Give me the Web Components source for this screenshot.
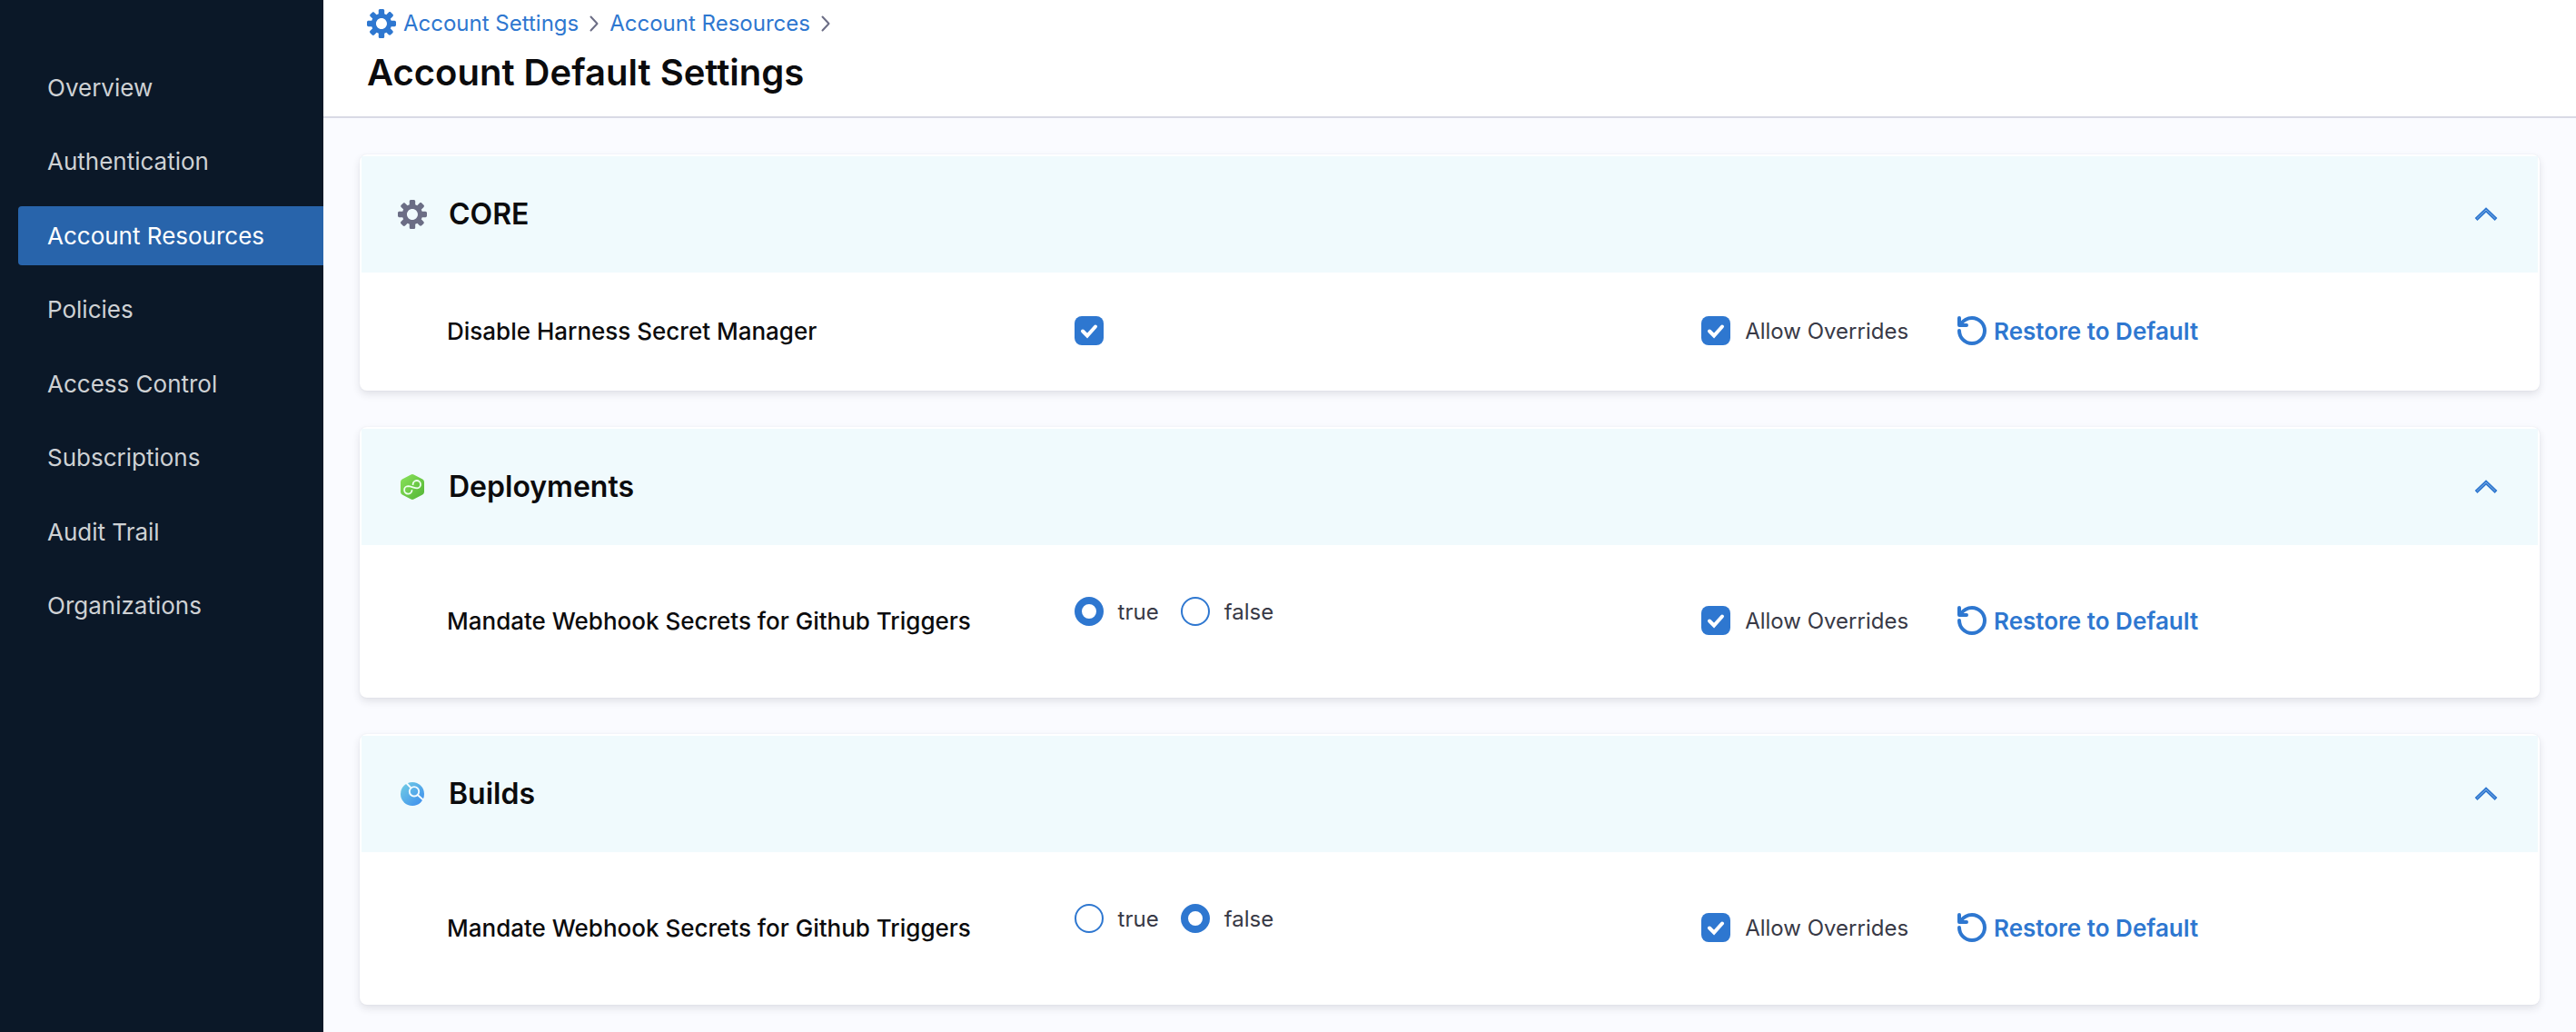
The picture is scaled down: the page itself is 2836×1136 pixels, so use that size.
<!DOCTYPE html>
<html lang="en">
<head>
<meta charset="utf-8">
<title>Account Default Settings</title>
<style>
  html, body { height: 100%; }
  body { margin: 0; overflow: hidden; font-family: Inter, "Liberation Sans", sans-serif; color: #0b0b0d; background: #fafbff; }
</style>
</head>
<body>
<app-shell>
  <side-nav slot="nav"></side-nav>
  <page-header slot="header" heading="Account Default Settings"></page-header>
  <settings-card heading="CORE" icon="core">
    <setting-row label="Disable Harness Secret Manager" type="checkbox"></setting-row>
  </settings-card>
  <settings-card heading="Deployments" icon="deployments">
    <setting-row label="Mandate Webhook Secrets for Github Triggers" type="radio" value="true"></setting-row>
  </settings-card>
  <settings-card heading="Builds" icon="builds">
    <setting-row label="Mandate Webhook Secrets for Github Triggers" type="radio" value="false"></setting-row>
  </settings-card>
</app-shell>

<script>
const COG = `<path fill="currentColor" fill-rule="evenodd" d="M15.19 6.39h-1.85c-.11-.37-.27-.71-.45-1.04l1.36-1.36c.31-.31.31-.82 0-1.13l-1.13-1.13c-.31-.31-.82-.31-1.13 0l-1.36 1.36c-.33-.17-.67-.33-1.04-.44V.79c0-.44-.36-.8-.8-.8h-1.6c-.44 0-.8.36-.8.8v1.86c-.39.12-.75.28-1.1.47l-1.3-1.3c-.3-.3-.79-.3-1.09 0L1.82 2.91c-.3.3-.3.79 0 1.09l1.3 1.3c-.2.34-.36.7-.48 1.09H.79c-.44 0-.8.36-.8.8v1.6c0 .44.36.8.8.8h1.85c.11.37.27.71.45 1.04l-1.36 1.36c-.31.31-.31.82 0 1.13l1.13 1.13c.31.31.82.31 1.13 0l1.36-1.36c.33.18.67.33 1.04.44v1.86c0 .44.36.8.8.8h1.6c.44 0 .8-.36.8-.8v-1.86c.39-.12.75-.28 1.1-.47l1.3 1.3c.3.3.79.3 1.09 0l1.09-1.09c.3-.3.3-.79 0-1.09l-1.3-1.3c.19-.35.36-.71.48-1.1h1.85c.44 0 .8-.36.8-.8v-1.6a.816.816 0 00-.81-.79zm-7.2 4.6c-1.66 0-3-1.34-3-3s1.34-3 3-3 3 1.34 3 3-1.34 3-3 3z"/>`;

const ICONS = {
  core: ['0 0 16 16', COG],
  deployments: ['0 0 32 32', `
    <defs><linearGradient id="g" x1="0" y1="0" x2="1" y2="1"><stop offset="0" stop-color="#8be35b"/><stop offset="1" stop-color="#52b435"/></linearGradient></defs>
    <path fill="url(#g)" d="M14.4 2.4a3.4 3.4 0 0 1 3.2 0l9.6 5.2a3.4 3.4 0 0 1 1.8 3v10.8a3.4 3.4 0 0 1-1.8 3l-9.6 5.2a3.4 3.4 0 0 1-3.2 0l-9.6-5.2a3.4 3.4 0 0 1-1.8-3V10.6a3.4 3.4 0 0 1 1.8-3z"/>
    <path fill="none" stroke="#effff0" stroke-width="1.8" stroke-linecap="round" d="M16.6 13.2a4.2 4.2 0 1 1 4.6 4.2C18 17.3 14.5 15.2 11.2 15.2a4.2 4.2 0 1 0 4.3 4.600"/>`],
  builds: ['0 0 32 32', `
    <defs><linearGradient id="g" x1="0" y1="0" x2="1" y2="1"><stop offset="0" stop-color="#73cfe4"/><stop offset="1" stop-color="#3b8bee"/></linearGradient></defs>
    <circle cx="16" cy="16" r="13" fill="url(#g)"/>
    <g fill="none" stroke="#f3fbff" stroke-width="1.9"><path d="M9 3.500l5.200 5.500M21.800 17l6.700 6"/><circle cx="18" cy="13.300" r="5.200"/></g>`]
};
const svg = (name) => `<svg viewBox="${ICONS[name][0]}" width="32" height="32" aria-hidden="true">${ICONS[name][1]}</svg>`;

function define(name, render) {
  customElements.define(name, class extends HTMLElement {
    connectedCallback() {
      if (this.shadowRoot) return;
      const root = this.attachShadow({ mode: 'open' });
      root.innerHTML = render(this);
    }
  });
}

define('app-shell', () => `
  <style>
    :host { display: flex; min-height: 100%; }
    ::slotted(side-nav) { flex: none; }
    main { flex: 1; min-width: 0; }
    .cards { display: flex; flex-direction: column; gap: 40px; padding: 40px; }
  </style>
  <slot name="nav"></slot>
  <main><slot name="header"></slot><div class="cards"><slot></slot></div></main>`);

define('side-nav', () => {
  const items = ['Overview', 'Authentication', 'Account Resources', 'Policies', 'Access Control', 'Subscriptions', 'Audit Trail', 'Organizations'];
  return `
  <style>
    :host { display: block; box-sizing: border-box; width: 356px; padding: 64px 0 0 20px; background: #0b1828; }
    nav { display: flex; flex-direction: column; justify-content: space-between; height: 635px; }
    a { display: flex; align-items: center; height: 65px; padding-left: 32px; border-radius: 4px 0 0 4px;
        font-size: 26px; color: #ced1d4; text-decoration: none; }
    a[aria-current] { color: #fff; background: #2864ab; }
  </style>
  <nav aria-label="Account">${items.map(t => `<a href="#"${t === 'Account Resources' ? ' aria-current="page"' : ''}>${t}</a>`).join('')}</nav>`;
});

define('page-header', (el) => {
  const sep = `<svg class="sep" viewBox="0 0 10 18" width="10" height="18" aria-hidden="true"><path d="M1.500 1.500L8.500 9l-7 7.500" fill="none" stroke="#6b6d85" stroke-width="2" stroke-linecap="round" stroke-linejoin="round"/></svg>`;
  return `
  <style>
    :host { display: block; box-sizing: border-box; height: 130px; padding: 10px 48px 0; background: #fff; border-bottom: 2px solid #d9dae5; }
    nav { display: flex; align-items: center; gap: 12px; height: 32px; font-size: 24px; line-height: 30px; }
    a { display: flex; align-items: center; gap: 8px; color: #2e77d0; text-decoration: none; }
    h1 { margin: 12px 0 0; font-size: 40px; line-height: 52px; font-weight: 600; }
  </style>
  <nav aria-label="Breadcrumb"><a href="#">${svg('core')}Account Settings</a>${sep}<a href="#">Account Resources</a>${sep}</nav>
  <h1>${el.getAttribute('heading')}</h1>`;
});

define('settings-card', (el) => `
  <style>
    :host { display: block; padding: 2px; border-radius: 8px; background: #fff; box-shadow: 0 4px 8px rgba(40,41,61,.12), 0 0 2px rgba(40,41,61,.06); }
    header { display: flex; align-items: center; gap: 24px; height: 128px; padding: 0 44px 0 40px; background: #f0fafd; }
    header svg { color: #6b6d85; }
    h2 { flex: 1; margin: 0; font-size: 32px; line-height: 40px; font-weight: 600; }
    button { display: flex; padding: 0; border: 0; background: none; }
  </style>
  <header>
    ${svg(el.getAttribute('icon'))}
    <h2>${el.getAttribute('heading')}</h2>
    <button type="button" aria-label="Collapse ${el.getAttribute('heading')}"><svg viewBox="0 0 26 18" width="26" height="18" aria-hidden="true"><g fill="none"><path d="M2 14.500L13 4l11 10.500" stroke="#2e77d0" stroke-width="4"/><path d="M3 13.500L13 4l10 9.500" stroke="#7fadE3" stroke-width="1"/></g></svg></button>
  </header>
  <slot></slot>`);

define('setting-row', (el) => {
  const label = el.getAttribute('label');
  const isRadio = el.getAttribute('type') === 'radio';
  const box = (id) => `<span class="box"><input type="checkbox" id="${id}" checked><svg viewBox="0 0 32 32" width="32" height="32" aria-hidden="true"><path d="M9 16.500l5 5L23 11.500" fill="none" stroke="#fff" stroke-width="4" stroke-linecap="round"/></svg></span>`;
  const radio = (v) => `<label class="option"><input type="radio" name="v" value="${v}"${el.getAttribute('value') === v ? ' checked' : ''}>${v}</label>`;
  return `
  <style>
    :host { display: block; }
    .row { display: grid; grid-template-columns: 3fr 3fr 4fr; align-items: center; min-height: 128px; padding-left: 94px; font-size: 24px; color: #383946; }
    .row.radio { min-height: 166px; }
    .name { font-size: 26px; font-weight: 500; color: #0b0b0d; }
    .options { display: flex; gap: 24px; padding-bottom: 20px; }
    .option { display: flex; align-items: center; gap: 16px; }
    .actions { display: flex; align-items: center; gap: 54px; }
    .box { display: grid; width: 32px; height: 32px; }
    .box > * { grid-area: 1 / 1; }
    .box svg { pointer-events: none; }
    input { appearance: none; box-sizing: border-box; width: 32px; height: 32px; margin: 0; border-radius: 8px; background: #2e77d0; }
    input[type=radio] { border: 2px solid #2e77d0; border-radius: 50%; background: #fff; }
    input[type=radio]:checked { border-width: 8px; }
    button { display: flex; align-items: center; gap: 8px; padding: 0; border: 0; background: none; font: inherit; font-size: 26px; font-weight: 600; color: #2e77d0; }
  </style>
  <div class="row ${isRadio ? 'radio' : ''}">
    ${isRadio
      ? `<span class="name" id="n">${label}</span><div class="options" role="radiogroup" aria-labelledby="n">${radio('true')}${radio('false')}</div>`
      : `<label class="name" for="v">${label}</label>${box('v')}`}
    <div class="actions">
      <label class="option" for="o">${box('o')}Allow Overrides</label>
      <button type="button"><svg viewBox="0 0 16 16" width="32" height="32" aria-hidden="true"><path d="M1 8a7 7 0 1 0 7-7C5.600 1 3.400 2.200 1.800 4.400M1 1v4h4" fill="none" stroke="currentColor" stroke-width="2" stroke-linecap="round" stroke-linejoin="round"/></svg>Restore to Default</button>
    </div>
  </div>`;
});
</script>
</body>
</html>
